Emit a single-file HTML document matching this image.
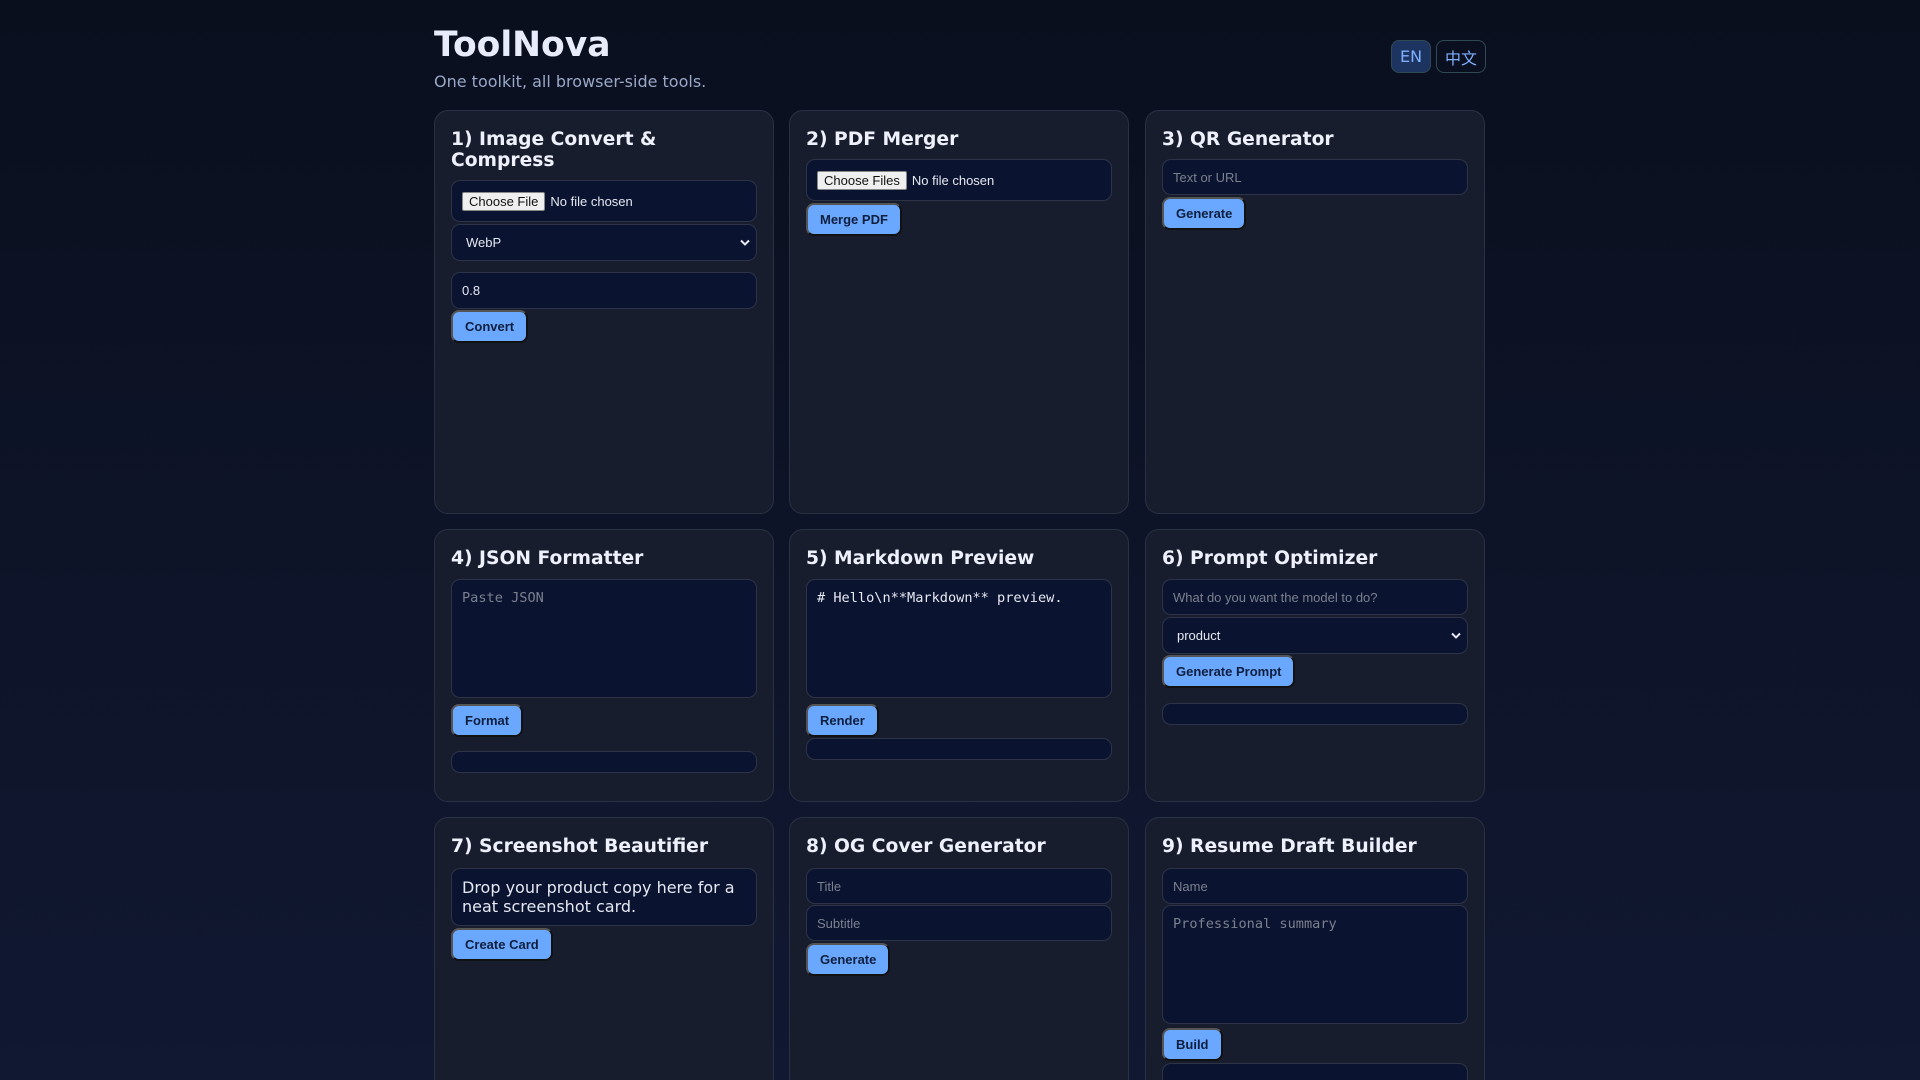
<!DOCTYPE html>
<html><head><meta charset="utf-8"><style>
*{box-sizing:border-box}
html,body{margin:0;height:1080px;overflow:hidden}
body{background:linear-gradient(180deg,#0a0f1e 0%,#0e1428 50%,#101832 100%);font-family:"DejaVu Sans","Liberation Sans",sans-serif;color:#e6eaf5;position:relative;width:1920px}
.t{position:absolute;left:434px;top:25px;font-size:34.5px;font-weight:bold;color:#e8ecfa;margin:0}
.sub{position:absolute;left:434px;top:72px;font-size:16px;color:#9aa8c8}
.lang{position:absolute;top:40px;height:33px;border-radius:8px;border:1px solid #2f4a55;color:#7fb0ff;font-size:16px;display:flex;align-items:center;justify-content:center;font-family:"DejaVu Sans","Noto Sans CJK SC",sans-serif}
.card{position:absolute;width:340px;background:#181d2e;border:1px solid #2b3145;border-radius:14px}
.card>*{position:absolute;left:16px;width:306px}
h2{margin:0;font-size:18.7px;line-height:21px;font-weight:bold;color:#eef1fb;top:18px}
.in{background:#0a1330;border:1px solid #2d3448;border-radius:9px;font-family:"Liberation Sans",Arial,sans-serif;font-size:13px;color:#e6e9f2;display:flex;align-items:center;padding-left:10px}
.ph{color:#7c818e}
.ta{align-items:flex-start;padding-top:10px;font-family:"DejaVu Sans Mono",monospace;font-size:13.6px}
.btn{width:auto!important;height:33px;background:#6aa8ff;border:2px solid;border-color:#555 #111 #111 #555;border-radius:8px;font-family:"Liberation Sans",Arial,sans-serif;font-weight:bold;font-size:13px;color:#0f1e3d;display:flex;align-items:center;padding:0 12px}
.fb{background:#efefef;color:#111;border:1px solid #888;border-radius:2px;padding:1px 6px;margin-right:5px;font-size:13px}
.sel{justify-content:space-between;padding:0 6px 0 14px}
.sel svg{width:10px;height:7px}
.out{height:22px}
</style></head><body>
<h1 class="t">ToolNova</h1>
<div class="sub">One toolkit, all browser-side tools.</div>
<div class="lang" style="left:1391px;width:40px;background:#1e3460">EN</div>
<div class="lang" style="left:1436px;width:50px">中文</div>

<div class="card" style="left:434px;top:110px;height:404px">
<h2>1) Image Convert &amp;<br>Compress</h2>
<div class="in" style="top:69px;height:42px"><span class="fb">Choose File</span>No file chosen</div>
<div class="in sel" style="top:113px;height:37px"><span>WebP</span><svg viewBox="0 0 10 7"><path d="M1 1.5L5 5.5L9 1.5" stroke="#e6e9f2" stroke-width="2" fill="none"/></svg></div>
<div class="in" style="top:161px;height:37px">0.8</div>
<div class="btn" style="top:199px">Convert</div>
</div>
<div class="card" style="left:789px;top:110px;height:404px">
<h2>2) PDF Merger</h2>
<div class="in" style="top:48px;height:42px"><span class="fb">Choose Files</span>No file chosen</div>
<div class="btn" style="top:92px">Merge PDF</div>
</div>
<div class="card" style="left:1145px;top:110px;height:404px">
<h2>3) QR Generator</h2>
<div class="in ph" style="top:48px;height:36px">Text or URL</div>
<div class="btn" style="top:86px">Generate</div>
</div>

<div class="card" style="left:434px;top:529px;height:273px">
<h2>4) JSON Formatter</h2>
<div class="in ta ph" style="top:49px;height:119px">Paste JSON</div>
<div class="btn" style="top:174px">Format</div>
<div class="in out" style="top:221px"></div>
</div>
<div class="card" style="left:789px;top:529px;height:273px">
<h2>5) Markdown Preview</h2>
<div class="in ta" style="top:49px;height:119px">#&nbsp;Hello\n**Markdown**&nbsp;preview.</div>
<div class="btn" style="top:174px">Render</div>
<div class="in out" style="top:208px"></div>
</div>
<div class="card" style="left:1145px;top:529px;height:273px">
<h2>6) Prompt Optimizer</h2>
<div class="in ph" style="top:49px;height:36px">What do you want the model to do?</div>
<div class="in sel" style="top:87px;height:37px"><span>product</span><svg viewBox="0 0 10 7"><path d="M1 1.5L5 5.5L9 1.5" stroke="#e6e9f2" stroke-width="2" fill="none"/></svg></div>
<div class="btn" style="top:125px">Generate Prompt</div>
<div class="in out" style="top:173px"></div>
</div>

<div class="card" style="left:434px;top:817px;height:300px">
<h2>7) Screenshot Beautifier</h2>
<div class="in" style="top:50px;height:58px;font-family:'DejaVu Sans',sans-serif;font-size:16px;line-height:19px">Drop your product copy here for a neat screenshot card.</div>
<div class="btn" style="top:110px">Create Card</div>
</div>
<div class="card" style="left:789px;top:817px;height:300px">
<h2>8) OG Cover Generator</h2>
<div class="in ph" style="top:50px;height:36px">Title</div>
<div class="in ph" style="top:87px;height:36px">Subtitle</div>
<div class="btn" style="top:125px">Generate</div>
</div>
<div class="card" style="left:1145px;top:817px;height:300px">
<h2>9) Resume Draft Builder</h2>
<div class="in ph" style="top:50px;height:36px">Name</div>
<div class="in ta ph" style="top:87px;height:119px">Professional summary</div>
<div class="btn" style="top:210px">Build</div>
<div class="in out" style="top:245px;height:40px"></div>
</div>
</body></html>
